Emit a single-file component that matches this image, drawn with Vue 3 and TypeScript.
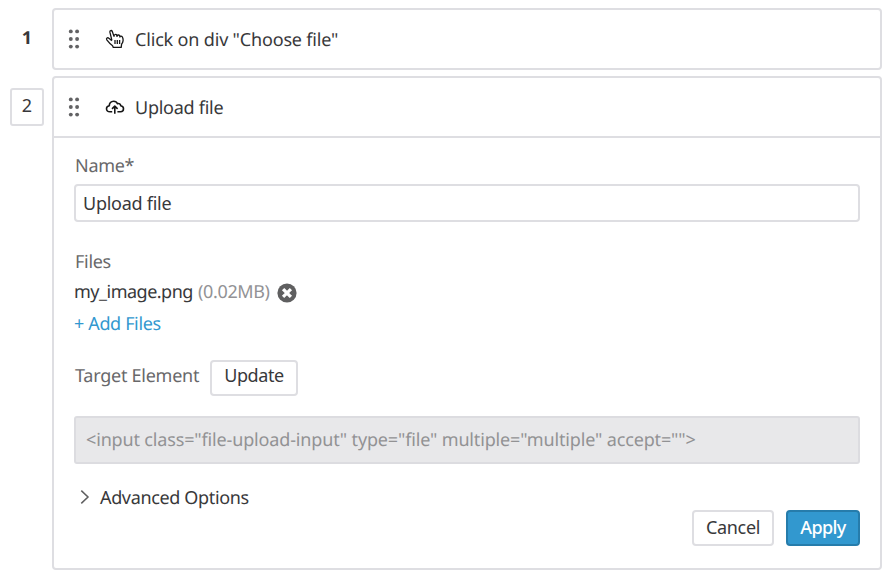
<script setup lang="ts">
import { ref } from 'vue'

const stepName = ref('Upload file')
const target = '<input class="file-upload-input" type="file" multiple="multiple" accept="">'
const dots = [0, 1, 2]
</script>

<template>
  <main class="steps">
    <section class="step">
      <div class="gutter"><span class="num">1</span></div>
      <div class="card">
        <header class="head">
          <svg class="grip" width="12" height="20" viewBox="0 0 12 20">
            <g v-for="d in dots" :key="d">
              <circle cx="2.8" :cy="2.4 + d * 7.6" r="1.95" />
              <circle cx="9.1" :cy="2.4 + d * 7.6" r="1.95" />
            </g>
          </svg>
          <svg class="icon" width="20" height="20" viewBox="0 0 20 20">
            <path d="M6.9 11.4 4.9 3.2C4.5 1.3 6.7 .9 7.3 2.5L9 7.4C8.9 5.3 11.1 4.8 11.8 6.3L12 7.4C12 5.8 14 5.5 14.7 6.8L14.9 8C15 6.8 16.7 6.8 17.4 8 18.7 10.6 18.2 13 16.6 15.2L16.2 18.4H8.3L7.6 16.7C5.6 15.3 3.8 13.4 1.8 10.8 .9 9.2 2.5 8.1 3.9 9.3L6.9 11.7M10 11V15M12.3 11V15M14.6 11V15" />
          </svg>
          <span class="title t1">Click on div "Choose file"</span>
        </header>
      </div>
    </section>

    <section class="step">
      <div class="gutter"><span class="num active">2</span></div>
      <div class="card open">
        <header class="head">
          <svg class="grip" width="12" height="20" viewBox="0 0 12 20">
            <g v-for="d in dots" :key="d">
              <circle cx="2.8" :cy="2.4 + d * 7.6" r="1.95" />
              <circle cx="9.1" :cy="2.4 + d * 7.6" r="1.95" />
            </g>
          </svg>
          <svg class="icon cloud" width="20" height="20" viewBox="0 0 20 20">
            <path d="M7.2 14.8H5C2.7 14.8 1.5 13.5 1.5 11.7 1.5 10.1 2.7 8.9 4.3 8.7 4.2 6.2 6 4.2 8.6 4.2 10.5 4.2 11.9 5.2 12.5 6.7 14.2 6.1 15.6 7.2 15.7 8.8 17.3 9 18.5 10.2 18.5 11.8 18.5 13.5 17.2 14.8 15.5 14.8H12.4M9.8 16.8V9.4M7 11.9 9.8 9.2 12.6 11.9" />
          </svg>
          <span class="title t2">Upload file</span>
        </header>
        <div class="body">
          <label class="label name-label" for="name">Name*</label>
          <input id="name" v-model="stepName" class="field" type="text" />
          <div class="label files-label">Files</div>
          <div class="file-row">
            <span class="file-name">my_image.png</span>
            <span class="file-size">(0.02MB)</span>
            <svg class="remove" width="20" height="20" viewBox="0 0 20 20">
              <circle cx="10" cy="10" r="9.6" fill="#5f5f60" />
              <path d="M7.2 7.2 12.8 12.8M12.8 7.2 7.2 12.8" stroke="#fff" stroke-width="3.2" stroke-linecap="square" />
            </svg>
          </div>
          <a class="add">+ Add Files</a>
          <div class="target-row">
            <span class="label target-label">Target Element</span>
            <button class="btn update">Update</button>
          </div>
          <div class="code"><span>{{ target }}</span></div>
          <div class="advanced">
            <svg width="10" height="16" viewBox="0 0 10 16">
              <path d="M1.3 1.6 8 8 1.3 14.4" fill="none" stroke="#5f5f60" stroke-width="1.5" />
            </svg>
            <span>Advanced Options</span>
          </div>
          <footer class="actions">
            <button class="btn cancel">Cancel</button>
            <button class="btn apply">Apply</button>
          </footer>
        </div>
      </div>
    </section>
  </main>
</template>

<style>
body {
  background: #fff;
}
</style>

<style scoped>
.steps {
  box-sizing: border-box;
  width: 892px;
  height: 582px;
  padding: 8px 10px;
  display: flex;
  flex-direction: column;
  gap: 6px;
  font: 18px/24px "Noto Sans", sans-serif;
  letter-spacing: -0.3px;
  text-rendering: geometricPrecision;
  color: #38383a;
}
.steps * {
  box-sizing: border-box;
}
.step {
  display: flex;
}
.gutter {
  width: 42px;
  padding-top: 12px;
}
.num {
  display: block;
  width: 34px;
  height: 38px;
  line-height: 37px;
  text-align: center;
  font-weight: 700;
  letter-spacing: 0;
}
.num.active {
  border: 2px solid #dedee2;
  border-radius: 3px;
  line-height: 33px;
  font-weight: 400;
}
.card {
  width: 830px;
  height: 62px;
  border: 2px solid #dedee2;
  border-radius: 4px;
}
.card.open {
  height: 494px;
}
.head {
  display: flex;
  align-items: center;
  height: 58px;
  padding-left: 14px;
  white-space: nowrap;
}
.open .head {
  height: 60px;
  border-bottom: 2px solid #dedee2;
}
.title {
  padding-top: 2px;
}
.t1 {
  letter-spacing: -0.17px;
}
.t2 {
  letter-spacing: -0.26px;
}
.grip {
  fill: #626264;
}
.icon {
  margin: 0 10px 0 25px;
  fill: none;
  stroke: #151515;
  stroke-width: 1.3;
  stroke-linejoin: round;
}
.cloud {
  stroke-width: 1.6;
}
.body {
  display: flex;
  flex-direction: column;
  align-items: flex-start;
  padding: 16px 20px 0;
  white-space: nowrap;
}
.label {
  color: #68686a;
}
.name-label,
.files-label {
  padding-left: 1px;
}
.field {
  width: 100%;
  height: 38px;
  margin: 6px 0 28px;
  padding: 0 7px 1px;
  border: 2px solid #dedee2;
  border-radius: 4px;
  outline: none;
  font: inherit;
  letter-spacing: -0.26px;
  color: inherit;
  background: #fff;
}
.file-row {
  display: flex;
  align-items: center;
  margin-top: 6px;
}
.file-name {
  width: 119px;
  letter-spacing: -0.5px;
}
.file-size {
  width: 73px;
  margin-left: 5px;
  letter-spacing: -0.36px;
  color: #929295;
}
.remove {
  margin: 2px 0 0 6px;
}
.add {
  margin-top: 8px;
  color: #3298cf;
  letter-spacing: -0.36px;
}
.target-row {
  display: flex;
  margin-top: 24px;
}
.target-label {
  width: 136px;
  padding: 4px 0 0 1px;
  letter-spacing: -0.25px;
}
.btn {
  height: 36px;
  padding: 0 0 2px;
  border: 2px solid #dedee2;
  border-radius: 4px;
  background: #fff;
  font: inherit;
  line-height: 28px;
  letter-spacing: -0.3px;
  color: inherit;
}
.update {
  width: 88px;
  padding-bottom: 6px;
  line-height: 24px;
  letter-spacing: -0.4px;
}
.code {
  width: 100%;
  height: 48px;
  margin-top: 20px;
  padding: 10px 10px 8px;
  border: 2px solid #dcdce0;
  border-radius: 3px;
  background: #e8e8ea;
  color: #929294;
  letter-spacing: -0.155px;
}
.advanced {
  display: flex;
  align-items: center;
  gap: 10px;
  height: 24px;
  margin-top: 21px;
  padding-left: 6px;
  letter-spacing: -0.35px;
}
.advanced span {
  padding-top: 2px;
}
.actions {
  display: flex;
  align-self: flex-end;
  gap: 12px;
  margin-top: 1px;
}
.cancel {
  width: 82px;
}
.apply {
  width: 74px;
  border-color: #267cab;
  background: #3298cf;
  color: #fff;
  font-weight: 500;
  letter-spacing: -0.6px;
}
</style>
